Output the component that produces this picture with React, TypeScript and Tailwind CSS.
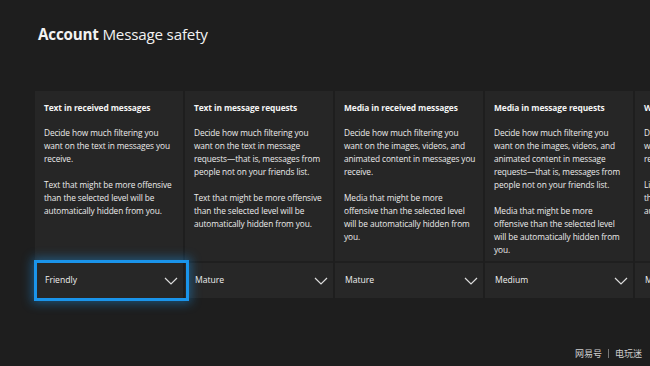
interface Setting {
  title: string;
  intro: string;
  note: string;
  value: string;
}

const settings: Setting[] = [
  {
    title: 'Text in received messages',
    intro: 'Decide how much filtering you want on the text in messages you receive.',
    note: 'Text that might be more offensive than the selected level will be automatically hidden from you.',
    value: 'Friendly',
  },
  {
    title: 'Text in message requests',
    intro: 'Decide how much filtering you want on the text in message requests\u2014that is, messages from people not on your friends list.',
    note: 'Text that might be more offensive than the selected level will be automatically hidden from you.',
    value: 'Mature',
  },
  {
    title: 'Media in received messages',
    intro: 'Decide how much filtering you want on the images, videos, and animated content in messages you receive.',
    note: 'Media that might be more offensive than the selected level will be automatically hidden from you.',
    value: 'Mature',
  },
  {
    title: 'Media in message requests',
    intro: 'Decide how much filtering you want on the images, videos, and animated content in message requests\u2014that is, messages from people not on your friends list.',
    note: 'Media that might be more offensive than the selected level will be automatically hidden from you.',
    value: 'Medium',
  },
  {
    title: 'Web links in received messages',
    intro: 'Decide how much filtering you want on links in messages you receive.',
    note: 'Links that might be more offensive than the selected level will be automatically hidden from you.',
    value: 'Mature',
  },
];

function Chevron() {
  return (
    <svg width="14" height="8" viewBox="0 0 14 8" fill="none" className="text-[#dcdcdc]">
      <path d="M1 1l6 6 6-6" stroke="currentColor" strokeWidth="1.2" />
    </svg>
  );
}

export default function App() {
  return (
    <div
      className="relative w-[650px] h-[366px] overflow-hidden bg-[#1e1e1e] text-white"
      style={{ fontFamily: '"Open Sans", "Noto Sans", sans-serif' }}
    >
      <h1 className="pt-[22px] pl-[38px] text-[15.2px] leading-[24px] tracking-[-0.2px] text-[#f2f2f2]">
        <span className="font-bold">Account</span> Message safety
      </h1>

      <div className="mt-[45px] pl-[35px] flex gap-[2px]">
        {settings.map((s, i) => (
          <div key={i} className="shrink-0 w-[148px] flex flex-col bg-[#262626]">
            <div className="h-[172px] pl-[9px] pr-[5px] pt-[10px] border-b-2 border-[#1f1f1f]">
              <h2 className="text-[8.4px] leading-[13px] font-bold text-[#f4f4f4] whitespace-nowrap tracking-[-0.1px]">
                {s.title}
              </h2>
              <p className="mt-[12px] text-[8.3px] leading-[13px] text-[#ececec] tracking-[-0.1px]">
                {s.intro}
              </p>
              <p className="mt-[13px] text-[8.3px] leading-[13px] text-[#ececec] tracking-[-0.1px]">
                {s.note}
              </p>
            </div>
            <div className="relative h-[35px] flex items-center justify-between pl-[10px] pr-[5px] bg-[#272727]">
              <span className="text-[8.6px] text-[#f0f0f0]">{s.value}</span>
              <Chevron />
              {i === 0 && (
                <div className="absolute z-10 -left-[1px] -right-[6px] -top-[3px] -bottom-[3px] border-[3px] border-[#1a94ea] shadow-[0_0_10px_2px_rgba(26,148,234,0.45)] pointer-events-none" />
              )}
            </div>
          </div>
        ))}
      </div>

      <div className="absolute right-[8px] bottom-[6px] flex items-center gap-[6px] text-[9px] text-[#cfcfcf]" style={{ fontFamily: '"Noto Sans CJK SC", sans-serif' }}>
        <span>网易号</span>
        <span className="w-px h-[9px] bg-[#777]" />
        <span>电玩迷</span>
      </div>
    </div>
  );
}
